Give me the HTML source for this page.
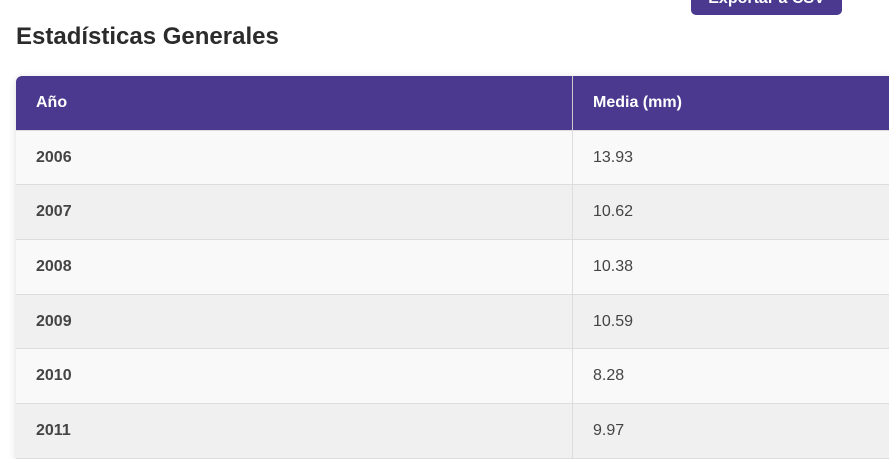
<!DOCTYPE html>
<html><head><style>
body{margin:0;width:889px;height:454px;overflow:hidden;background:#fff;font-family:"Liberation Sans",sans-serif;position:relative}
.btn{position:absolute;left:691px;top:-20px;width:151px;height:35px;background:#4a398f;border-radius:5px;color:#fff;font-size:16px;font-weight:bold;text-align:center;line-height:30px;padding-top:4px;box-sizing:border-box}
h2{position:absolute;left:16px;top:23px;margin:0;font-size:24px;font-weight:bold;color:#2b2b2b}
.tbl{position:absolute;left:16px;top:76px;width:900px;box-shadow:0 2px 8px rgba(0,0,0,.15);border-radius:6px 6px 0 0}
.r{display:flex;height:54.7px;border-bottom:1px solid #ddd;box-sizing:border-box;font-size:16px;color:#444}
.r div{display:flex;align-items:center;box-sizing:border-box}
.c1{width:557px;padding-left:20px;font-weight:bold;border-right:1px solid #ddd}
.c2{flex:1;padding-left:20px}
.h{background:#4a398f;color:#fff;border-radius:6px 6px 0 0;border-bottom:1px solid #ddd}
.h div{font-weight:bold;color:#fff}
.h .c1{border-right:1px solid #ccc}
.a{background:#f9f9f9}.b{background:#f0f0f0}
</style></head><body>
<div class="btn">Exportar a CSV</div>
<h2>Estadísticas Generales</h2>
<div class="tbl">
<div class="r h"><div class="c1">Año</div><div class="c2">Media (mm)</div></div>
<div class="r a"><div class="c1">2006</div><div class="c2">13.93</div></div>
<div class="r b"><div class="c1">2007</div><div class="c2">10.62</div></div>
<div class="r a"><div class="c1">2008</div><div class="c2">10.38</div></div>
<div class="r b"><div class="c1">2009</div><div class="c2">10.59</div></div>
<div class="r a"><div class="c1">2010</div><div class="c2">8.28</div></div>
<div class="r b"><div class="c1">2011</div><div class="c2">9.97</div></div>
</div>
</body></html>
